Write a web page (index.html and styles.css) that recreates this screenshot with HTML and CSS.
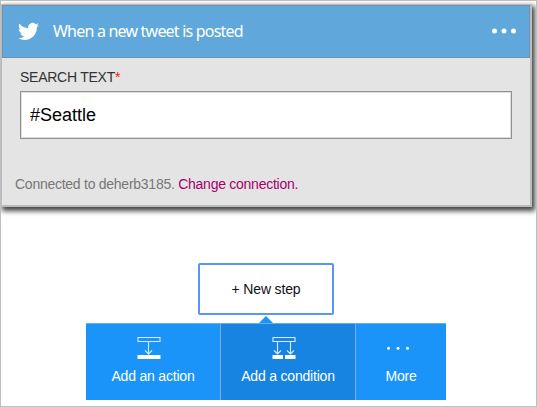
FILE: index.html
```html
<!DOCTYPE html>
<html lang="en">
<head>
<meta charset="utf-8">
<title>Flow designer</title>
<link rel="stylesheet" href="styles.css">
</head>
<body>
<main class="designer">
  <section class="card">
    <header class="card-header">
      <svg class="bird" viewBox="0 0 24 24" aria-hidden="true"><path d="M23.95 4.57a10 10 0 0 1-2.82.77 4.96 4.96 0 0 0 2.16-2.72c-.95.55-2 .95-3.13 1.18a4.92 4.92 0 0 0-8.38 4.48C7.69 8.1 4.07 6.13 1.64 3.16a4.82 4.82 0 0 0-.67 2.48c0 1.71.87 3.21 2.19 4.1a4.9 4.9 0 0 1-2.23-.62v.06a4.92 4.92 0 0 0 3.95 4.83 5 5 0 0 1-2.21.08 4.94 4.94 0 0 0 4.6 3.42A9.87 9.87 0 0 1 0 19.54a13.99 13.99 0 0 0 7.55 2.21c9.05 0 14-7.5 14-13.98 0-.21 0-.42-.02-.63a9.94 9.94 0 0 0 2.42-2.57z"/></svg>
      <h1 class="title">When a new tweet is posted</h1>
      <svg class="menu" viewBox="0 0 24 6" aria-hidden="true"><circle cx="2.5" cy="3" r="2.5"/><circle cx="12" cy="3" r="2.5"/><circle cx="21.5" cy="3" r="2.5"/></svg>
    </header>
    <div class="card-body">
      <label class="label" for="search">SEARCH TEXT<span class="required">*</span></label>
      <input class="field" id="search" type="text" value="#Seattle">
      <p class="connection">Connected to deherb3185. <a class="link">Change connection.</a></p>
    </div>
  </section>
  <section class="steps">
    <button class="new-step">+ New step</button>
    <div class="pointer"></div>
    <nav class="actions">
      <a class="action">
        <svg class="icon" viewBox="0 0 24 24" aria-hidden="true"><path class="line" d="M1 1.500h22v4H1zM11.500 6v12M8 14.500l3.500 3.500 3.500-3.500"/><path class="solid" d="M.5 19h23v4H.5z"/></svg>
        <span>Add an action</span>
      </a>
      <a class="action active">
        <svg class="icon" viewBox="0 0 24 24" aria-hidden="true"><path class="line" d="M1 1.500h22v4H1zM5.500 6v12M2 14.500L5.500 18 9 14.500M18.500 6v12M15 14.500l3.500 3.500 3.500-3.500"/><path class="solid" d="M.5 19h10.500v4H.5zM13 19h10.500v4H13z"/></svg>
        <span>Add a condition</span>
      </a>
      <a class="action">
        <svg class="icon" viewBox="0 0 24 24" aria-hidden="true"><g class="solid"><circle cx="2.500" cy="12.300" r="1.500"/><circle cx="12" cy="12.300" r="1.500"/><circle cx="21.500" cy="12.300" r="1.500"/></g></svg>
        <span>More</span>
      </a>
    </nav>
  </section>
</main>
</body>
</html>
```
FILE: styles.css
```css
* { box-sizing: border-box; }
body {
  margin: 0;
  background: #fff;
  font-family: "Liberation Sans", Arial, sans-serif;
}
.designer {
  width: 537px;
  height: 407px;
  padding: 3px 4px 0 0;
  border: 1px solid #bfbfbf;
  overflow: hidden;
}
.card {
  width: 531px;
  height: 203px;
  border: 1px solid #bbb;
  border-width: 1px 2px 2px 1px;
  background: #e4e4e4;
  box-shadow: 2px 3px 5px 1px #444;
}
.card-header {
  display: flex;
  align-items: center;
  height: 53px;
  padding: 0 13px 0 15px;
  border: 1px solid #7093ad;
  background: #60a8dc;
}
.bird {
  width: 21px;
  height: 21px;
  fill: #fff;
}
.title {
  flex: 1;
  margin: 0 0 2px 14px;
  color: #fff;
  font: 400 16px/22px "Noto Sans", sans-serif;
  letter-spacing: -0.79px;
  white-space: nowrap;
}
.menu {
  width: 24px;
  height: 6px;
  margin-bottom: 1px;
  fill: #fff;
}
.card-body { padding: 11px 18px 0; }
.label {
  display: block;
  color: #333;
  font-size: 14px;
  line-height: 17px;
  letter-spacing: -0.25px;
}
.required { color: #f11; }
.field {
  display: block;
  width: 492px;
  height: 48px;
  margin-top: 5px;
  padding: 0 9px;
  border: 1px solid #919191;
  border-radius: 0;
  outline: 0;
  background: #fff;
  box-shadow: inset 0 0 0 1px #ddd;
  color: #000;
  font: 18px "Liberation Sans", Arial, sans-serif;
}
.connection {
  margin: 37px 0 0 -5px;
  color: #777;
  font-size: 14px;
  line-height: 17px;
  letter-spacing: -0.26px;
}
.link { color: #a4006e; }
.steps {
  display: flex;
  flex-direction: column;
  align-items: center;
  width: 360px;
  margin: 56px 0 0 85px;
}
.new-step {
  width: 136px;
  height: 52px;
  padding: 0;
  border: 2px solid #5896f5;
  border-radius: 2px;
  background: #fff;
  color: #111;
  font: 14px "Liberation Sans", Arial, sans-serif;
  letter-spacing: -0.15px;
}
.pointer {
  width: 14px;
  height: 7px;
  margin-top: 1px;
  background: #1a94f8;
  clip-path: polygon(50% 0, 100% 100%, 0 100%);
}
.actions {
  display: grid;
  grid-template-columns: 135px 135px 90px;
  width: 360px;
  height: 77px;
  border-top: 1px solid #65adf2;
  background: #1a94f8;
}
.action {
  display: flex;
  flex-direction: column;
  align-items: center;
  padding-top: 12px;
  border-right: 1px solid #7eabec;
  color: #fff;
  font-size: 14px;
  line-height: 17px;
  letter-spacing: -0.2px;
}
.action:last-child { border-right: 0; }
.active { background: #1784e2; }
.icon {
  width: 24px;
  height: 24px;
  margin: 0 9px 8px 0;
}
.action:last-child .icon { margin-right: 7px; }
.line {
  fill: none;
  stroke: #d8edff;
  stroke-width: 1.1;
}
.solid { fill: #fff; }
```
